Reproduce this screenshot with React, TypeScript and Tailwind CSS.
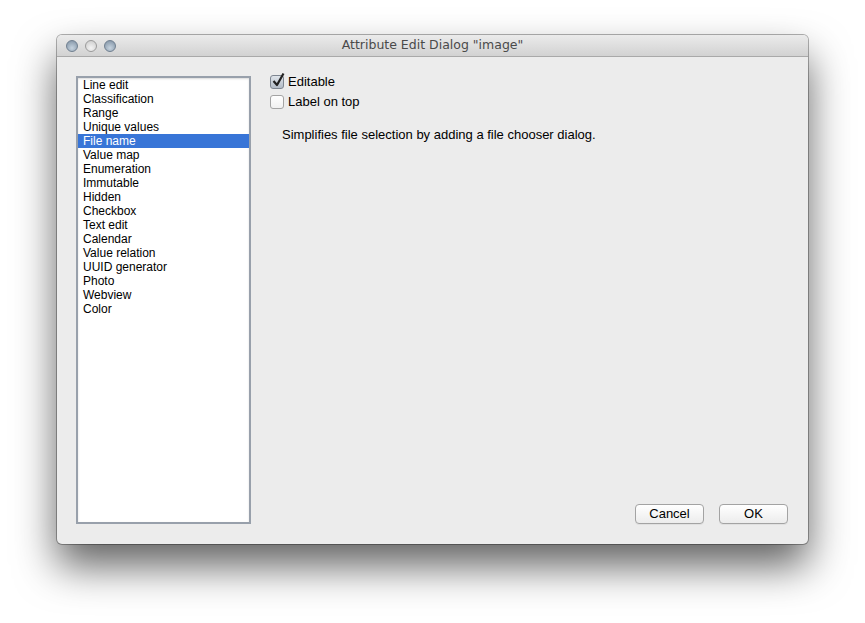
const items = [
  'Line edit',
  'Classification',
  'Range',
  'Unique values',
  'File name',
  'Value map',
  'Enumeration',
  'Immutable',
  'Hidden',
  'Checkbox',
  'Text edit',
  'Calendar',
  'Value relation',
  'UUID generator',
  'Photo',
  'Webview',
  'Color',
];

function TrafficLight({ light }: { light?: boolean }) {
  return (
    <span
      className={
        light
          ? 'block h-[12px] w-[12px] rounded-full border border-[#9a9a9a] bg-[radial-gradient(circle_at_50%_70%,#f4f4f4,#c9c9c9)]'
          : 'block h-[12px] w-[12px] rounded-full border border-[#6f7f8f] bg-[radial-gradient(circle_at_50%_70%,#c6d3df,#7d8fa1)]'
      }
    />
  );
}

function CheckBox({ checked }: { checked?: boolean }) {
  return (
    <span className="relative block h-[14px] w-[14px]">
      <span
        className={
          checked
            ? 'block h-[14px] w-[14px] rounded-[3px] border border-[#7d8590] bg-gradient-to-b from-[#dfe4ea] to-[#b3bcc7]'
            : 'block h-[14px] w-[14px] rounded-[3px] border border-[#a4a4a4] bg-gradient-to-b from-[#ffffff] to-[#f1f1f1]'
        }
      />
      {checked && (
        <svg className="absolute -top-[3px] left-[1px]" width="15" height="16" viewBox="0 0 15 16">
          <path d="M2.5 9 L6 13 L12.5 1.5" fill="none" stroke="#222" strokeWidth="2.2" strokeLinejoin="round" />
        </svg>
      )}
    </span>
  );
}

function Button({ label }: { label: string }) {
  return (
    <button className="h-[20px] w-[69px] rounded-[4px] border border-[#a3a3a3] bg-gradient-to-b from-[#ffffff] to-[#ececec] text-[13px] leading-[18px] text-black shadow-[0_1px_0_rgba(0,0,0,0.05)]">
      {label}
    </button>
  );
}

export default function App() {
  return (
    <div className="min-h-[623px] w-[865px] bg-white pl-[57px] pt-[35px] font-['Liberation_Sans',Arial,sans-serif]">
      <div className="flex h-[509px] w-[751px] flex-col overflow-hidden rounded-[5px] bg-[#ececec] shadow-[0_0_0_1px_rgba(0,0,0,0.3),0_22px_42px_rgba(0,0,0,0.62)]">
        {/* Title bar */}
        <div className="relative flex h-[22px] shrink-0 items-center border-b border-[#a9a9a9] bg-gradient-to-b from-[#ebebeb] to-[#d2d2d2]">
          <div className="flex gap-[7px] pl-[9px]">
            <TrafficLight />
            <TrafficLight light />
            <TrafficLight />
          </div>
          <div className="absolute inset-0 flex items-center justify-center font-['DejaVu_Sans',sans-serif] text-[12.5px] text-[#4a4a4a]">
            Attribute Edit Dialog "image"
          </div>
        </div>

        {/* Body */}
        <div className="flex flex-1 pb-[20px] pl-[19px] pr-[20px] pt-[17px]">
          <div className="mt-[2px] w-[175px] border-2 border-[#98a0ab] bg-white shadow-[inset_0_1px_2px_rgba(0,0,0,0.15)]">
            {items.map((item) => (
              <div
                key={item}
                className={
                  item === 'File name'
                    ? 'h-[14px] bg-[#3875d7] pl-[5px] text-[12px] leading-[14px] text-white'
                    : 'h-[14px] pl-[5px] text-[12px] leading-[14px] text-black'
                }
              >
                {item}
              </div>
            ))}
          </div>

          <div className="ml-[19px] flex flex-1 flex-col pt-[1px]">
            <div className="flex h-[14px] items-center gap-[4px]">
              <CheckBox checked />
              <span className="text-[13px] text-black">Editable</span>
            </div>
            <div className="mt-[6px] flex h-[14px] items-center gap-[4px]">
              <CheckBox />
              <span className="text-[13px] text-black">Label on top</span>
            </div>
            <p className="ml-[12px] mt-[18px] text-[13px] leading-[15px] text-black">
              Simplifies file selection by adding a file chooser dialog.
            </p>

            <div className="mt-auto flex justify-end gap-[15px]">
              <Button label="Cancel" />
              <Button label="OK" />
            </div>
          </div>
        </div>
      </div>
    </div>
  );
}
